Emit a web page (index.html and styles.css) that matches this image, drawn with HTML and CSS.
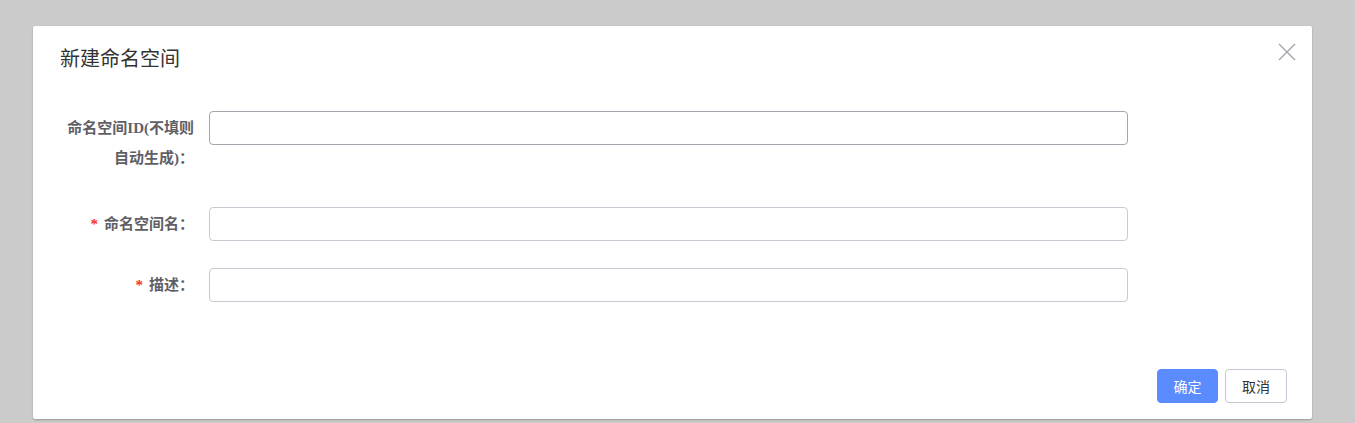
FILE: index.html
```html
<!DOCTYPE html>
<html lang="zh-CN">
<head>
<meta charset="utf-8">
<title>新建命名空间</title>
<link rel="stylesheet" href="styles.css">
</head>
<body>
<div class="dialog">
  <div class="dialog-header">
    <span class="dialog-title">新建命名空间</span>
    <button class="close" aria-label="关闭">
      <svg width="18" height="18" viewBox="0 0 18 18"><path d="M1 1L17 17M17 1L1 17" stroke="#a2a5ab" stroke-width="1.4" fill="none"/></svg>
    </button>
  </div>
  <form class="form">
    <div class="form-item item-id">
      <label class="label">命名空间ID(不填则自动生成)：</label>
      <div class="control"><input class="input input-focus" type="text"></div>
    </div>
    <div class="form-item item-name">
      <label class="label"><span class="req">*</span>命名空间名：</label>
      <div class="control"><input class="input" type="text"></div>
    </div>
    <div class="form-item">
      <label class="label"><span class="req">*</span>描述：</label>
      <div class="control"><input class="input" type="text"></div>
    </div>
  </form>
  <div class="dialog-footer">
    <button class="btn btn-primary">确定</button>
    <button class="btn btn-default">取消</button>
  </div>
</div>
</body>
</html>
```

FILE: styles.css
```css
html, body {
  margin: 0;
  padding: 0;
}
body {
  background: #cbcbcb;
  font-family: "Liberation Sans", "Noto Sans CJK SC", sans-serif;
  padding: 26px 0 0 33px;
  height: 423px;
  box-sizing: border-box;
  overflow: hidden;
}
.dialog {
  width: 1279px;
  height: 393px;
  background: #fff;
  border-radius: 2px;
  box-shadow: 0 1px 2px rgba(0,0,0,0.25);
  display: flex;
  flex-direction: column;
  box-sizing: border-box;
}
.dialog-header {
  display: flex;
  justify-content: space-between;
  align-items: flex-start;
  padding: 19px 16px 0 27px;
}
.dialog-title {
  font-family: "Noto Sans CJK SC", sans-serif;
  font-size: 20px;
  line-height: 26px;
  color: #333;
  font-weight: 400;
}
.close {
  border: 0;
  background: transparent;
  padding: 0;
  margin-top: -2px;
  width: 18px;
  height: 18px;
  cursor: pointer;
}
.close svg { display: block; }
.form {
  margin-top: 40px;
  padding-left: 27px;
}
.form-item {
  display: flex;
  align-items: flex-start;
  margin-bottom: 27px;
}
.item-id { margin-bottom: 34px; }
.label {
  width: 149px;
  flex-shrink: 0;
  box-sizing: border-box;
  padding: 2px 15px 0 0;
  text-align: right;
  font-family: "Liberation Serif", "Noto Sans CJK SC", serif;
  font-size: 15px;
  line-height: 30px;
  font-weight: 700;
  color: #5f6066;
}
.req {
  color: #f5341f;
  margin-right: 6px;
  font-weight: 700;
}
.control { width: 919px; }
.input {
  display: block;
  width: 100%;
  height: 34px;
  box-sizing: border-box;
  border: 1px solid #c9cad4;
  border-radius: 4px;
  padding: 0 12px;
  font-size: 14px;
  outline: none;
  background: #fff;
}
.input-focus { border-color: #a4a5ad; }
.dialog-footer {
  margin-top: auto;
  display: flex;
  justify-content: flex-end;
  gap: 7px;
  padding: 0 25px 16px 0;
}
.btn {
  height: 34px;
  padding: 0;
  font-size: 14px;
  font-family: "Noto Sans CJK SC", sans-serif;
  border-radius: 4px;
  cursor: pointer;
  box-sizing: border-box;
  text-align: center;
}
.btn-primary {
  width: 61px;
  background: #5a8bff;
  border: 1px solid #5a8bff;
  color: #fff;
}
.btn-default {
  width: 62px;
  background: #fff;
  border: 1px solid #c6c7d2;
  color: #333;
}
```
